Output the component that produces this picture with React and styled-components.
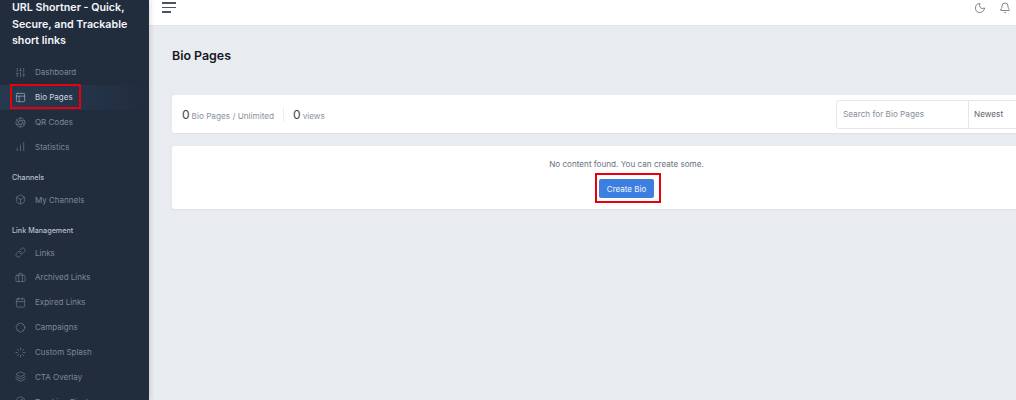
import React from "react";
import styled, { createGlobalStyle } from "styled-components";
import {
	SlidersVertical,
	PanelsTopLeft,
	Aperture,
	ChartNoAxesColumnIncreasing,
	Box,
	Link as LinkIcon,
	Calendar,
	Loader,
	Layers,
	Compass,
	Moon,
	Bell,
} from "lucide-react";

const GlobalStyle = createGlobalStyle`
	html, body {
		margin: 0;
		padding: 0;
		height: 400px;
		overflow: hidden;
		background: #e8ebf0;
	}
	* { box-sizing: border-box; }
`;

const Page = styled.div`
	display: flex;
	width: 1016px;
	height: 400px;
	overflow: hidden;
	font-family: Inter, "Liberation Sans", sans-serif;
`;

const Sidebar = styled.aside`
	flex: 0 0 149px;
	height: 400px;
	overflow: hidden;
	background: #212d3d;
	box-shadow: 2px 0 4px rgba(30, 40, 55, 0.12);
	z-index: 1;
`;

const Brand = styled.div`
	padding: 0 12px;
	height: 57px;
	color: #f4f6f9;
	font-size: 10.7px;
	font-weight: 600;
	line-height: 16.7px;
`;

const Nav = styled.nav`
	display: flex;
	flex-direction: column;
	padding-top: 3px;
`;

const NavItem = styled.a`
	display: flex;
	align-items: center;
	flex: 0 0 24.85px;
	height: 24.85px;
	padding-left: 15px;
	gap: 9px;
	font-size: 8px;
	color: ${p => (p.$active ? "#cfd6df" : "#7d8793")};
	background: ${p =>
		p.$active ? "linear-gradient(90deg, #27394f 0%, #25344a 55%, #212d3d 100%)" : "transparent"};

	svg {
		width: 11px;
		height: 11px;
		flex: 0 0 11px;
		stroke-width: 1.5;
		color: ${p => (p.$active ? "#aab3bf" : "#6f7985")};
	}
`;

const NavHeading = styled.div`
	height: 19px;
	padding: ${p => p.$pad}px 12px 0;
	box-sizing: content-box;
	line-height: 20px;
	font-size: 7.2px;
	font-weight: 500;
	color: #b6bfca;
`;

const Main = styled.main`
	flex: 1;
	min-width: 0;
	display: flex;
	flex-direction: column;
`;

const Topbar = styled.header`
	flex: 0 0 26px;
	display: flex;
	align-items: flex-start;
	background: #fff;
	border-bottom: 1px solid #e1e4e9;
	padding: 2px 5px 0 13px;
	color: #59616c;
`;

const Burger = styled.div`
	display: flex;
	flex-direction: column;
	gap: 3px;
	margin-right: auto;

	span {
		display: block;
		height: 1.5px;
		background: #4b5360;
	}
	span:nth-child(1) { width: 14px; }
	span:nth-child(2) { width: 14px; }
	span:nth-child(3) { width: 9px; }
`;

const TopIcons = styled.div`
	display: flex;
	align-items: center;
	gap: 13px;

	svg {
		width: 12px;
		height: 12px;
		stroke-width: 1.5;
	}
`;

const Content = styled.div`
	padding: 0 0 0 23px;
	width: 895px;
`;

const Title = styled.h1`
	margin: 0;
	height: 69px;
	padding-top: 21px;
	font-size: 12.4px;
	line-height: 18px;
	font-weight: 600;
	color: #14181f;
`;

const Card = styled.section`
	background: #fff;
	border-radius: 3px;
	box-shadow: 0 1px 2px rgba(60, 70, 90, 0.06);
`;

const StatsCard = styled(Card)`
	display: flex;
	align-items: center;
	height: 38px;
	padding: 0 8px 0 10px;
	margin-bottom: 13px;
`;

const Stat = styled.div`
	display: flex;
	align-items: baseline;
	gap: 2px;
	font-size: 8.2px;
	color: #8a929d;

	b {
		font-size: 12px;
		font-weight: 400;
		color: #3c4450;
	}
`;

const StatDivider = styled.div`
	width: 1px;
	height: 15px;
	margin: 0 9px;
	background: #eceef1;
`;

const SearchBox = styled.div`
	margin-left: auto;
	display: flex;
	align-items: center;
	width: 200px;
	height: 29px;
	border: 1px solid #e4e6ea;
	border-radius: 3px;
	font-size: 8.2px;
	color: #858d98;
`;

const SearchInput = styled.div`
	flex: 0 0 132px;
	padding-left: 6px;
	height: 100%;
	display: flex;
	align-items: center;
	border-right: 1px solid #e4e6ea;
`;

const SortSelect = styled.div`
	padding-left: 5px;
	color: #5e6670;
`;

const EmptyCard = styled(Card)`
	display: flex;
	flex-direction: column;
	align-items: center;
	height: 63px;
	padding-top: 12px;
	width: 909px;
`;

const EmptyText = styled.p`
	margin: 0 0 8px;
	font-size: 8.15px;
	line-height: 13px;
	color: #68717d;
`;

const CreateButton = styled.button`
	flex: 0 0 19px;
	width: 55px;
	padding: 0;
	border: none;
	border-radius: 2px;
	background: #3d7fe0;
	color: #f3f7fd;
	font-family: inherit;
	font-size: 8px;
`;

const Callout = styled.div`
	position: absolute;
	left: ${p => p.$x}px;
	top: ${p => p.$y}px;
	width: ${p => p.$w}px;
	height: ${p => p.$h}px;
	border: 2px solid #e8000b;
	z-index: 2;
	pointer-events: none;
`;

const Archive = () => (
	<svg viewBox="0 0 24 24" fill="none" stroke="currentColor" strokeLinecap="round" strokeLinejoin="round">
		<rect x="2" y="7" width="20" height="14" rx="2" />
		<path d="M8 21V7M16 21V7M8 7V5a2 2 0 0 1 2-2h4a2 2 0 0 1 2 2v2" />
	</svg>
);

const Campaign = () => (
	<svg viewBox="0 0 24 24" fill="none" stroke="currentColor" strokeLinecap="round">
		<circle cx="12" cy="12" r="9.5" />
		<path d="M5 5l2.5 2.5M19 5l-2.5 2.5M5 19l2.5-2.5M19 19l-2.5-2.5" />
	</svg>
);

const mainLinks = [
	{ icon: <SlidersVertical />, label: "Dashboard" },
	{ icon: <PanelsTopLeft />, label: "Bio Pages", active: true },
	{ icon: <Aperture />, label: "QR Codes" },
	{ icon: <ChartNoAxesColumnIncreasing />, label: "Statistics" },
];

const linkManagement = [
	{ icon: <LinkIcon />, label: "Links" },
	{ icon: <Archive />, label: "Archived Links" },
	{ icon: <Calendar />, label: "Expired Links" },
	{ icon: <Campaign />, label: "Campaigns" },
	{ icon: <Loader />, label: "Custom Splash" },
	{ icon: <Layers />, label: "CTA Overlay" },
	{ icon: <Compass />, label: "Tracking Pixels" },
];

const renderLinks = links =>
	links.map(({ icon, label, active }) => (
		<NavItem key={label} $active={active}>
			{icon}
			<span>{label}</span>
		</NavItem>
	));

export default function App() {
	return (
		<>
			<GlobalStyle />
			<Page>
				<Sidebar>
					<Brand>URL Shortner - Quick, Secure, and Trackable short links</Brand>
					<Nav>
						{renderLinks(mainLinks)}
						<NavHeading $pad={9}>Channels</NavHeading>
						<NavItem>
							<Box />
							<span>My Channels</span>
						</NavItem>
						<NavHeading $pad={9}>Link Management</NavHeading>
						{renderLinks(linkManagement)}
					</Nav>
				</Sidebar>
				<Main>
					<Topbar>
						<Burger>
							<span />
							<span />
							<span />
						</Burger>
						<TopIcons>
							<Moon />
							<Bell />
						</TopIcons>
					</Topbar>
					<Content>
						<Title>Bio Pages</Title>
						<StatsCard>
							<Stat>
								<b>0</b> Bio Pages / Unlimited
							</Stat>
							<StatDivider />
							<Stat>
								<b>0</b> views
							</Stat>
							<SearchBox>
								<SearchInput>Search for Bio Pages</SearchInput>
								<SortSelect>Newest</SortSelect>
							</SearchBox>
						</StatsCard>
						<EmptyCard>
							<EmptyText>No content found. You can create some.</EmptyText>
							<CreateButton>Create Bio</CreateButton>
						</EmptyCard>
					</Content>
				</Main>
			</Page>
			<Callout $x={10} $y={84} $w={71} $h={25} />
			<Callout $x={595} $y={173} $w={66} $h={30} />
		</>
	);
}
